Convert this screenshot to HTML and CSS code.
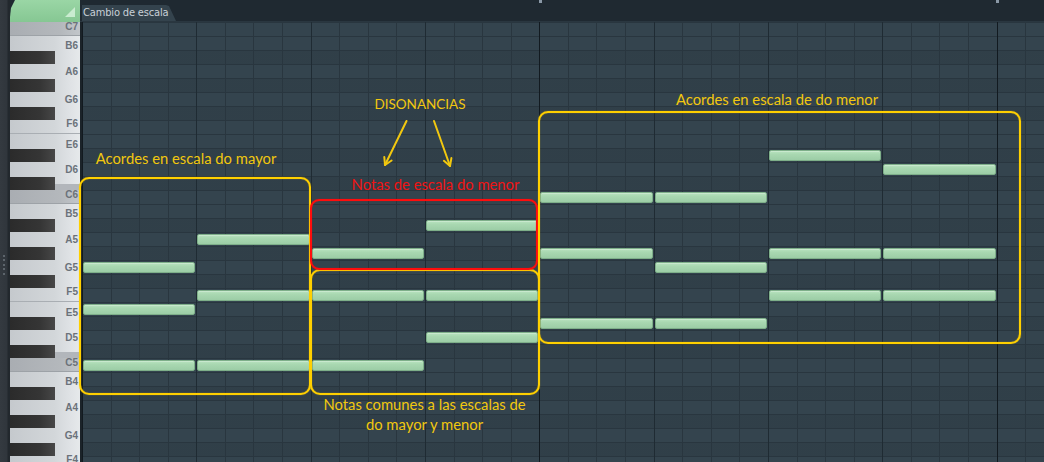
FILE: index.html
```html
<!DOCTYPE html>
<html lang="es">
<head>
<meta charset="utf-8">
<title>Cambio de escala</title>
<link rel="stylesheet" href="styles.css">
</head>
<body>
<div class="app">
  <div class="sidebar"><div class="grip"><i></i><i></i><i></i><i></i><i></i></div></div>
  <div class="main">
    <div class="topbar">
      <div class="corner"><span class="corner-tri"></span></div>
      <div class="tabs">
        <div class="tab">Cambio de escala</div>
        <span class="marker m-bar2"></span>
        <span class="marker m-bar3"></span>
      </div>
    </div>
    <div class="body">
      <div class="keys">
        <div class="key w c c-top"><span class="lbl">C7</span></div>
        <div class="key w b"><span class="lbl">B6</span></div>
        <div class="key k"></div>
        <div class="key w a"><span class="lbl">A6</span></div>
        <div class="key k"></div>
        <div class="key w g"><span class="lbl">G6</span></div>
        <div class="key k"></div>
        <div class="key w f"><span class="lbl">F6</span></div>
        <div class="key w e"><span class="lbl">E6</span></div>
        <div class="key k"></div>
        <div class="key w d"><span class="lbl">D6</span></div>
        <div class="key k db"></div>
        <div class="key w c"><span class="lbl">C6</span></div>
        <div class="key w b"><span class="lbl">B5</span></div>
        <div class="key k"></div>
        <div class="key w a"><span class="lbl">A5</span></div>
        <div class="key k"></div>
        <div class="key w g"><span class="lbl">G5</span></div>
        <div class="key k"></div>
        <div class="key w f"><span class="lbl">F5</span></div>
        <div class="key w e"><span class="lbl">E5</span></div>
        <div class="key k"></div>
        <div class="key w d"><span class="lbl">D5</span></div>
        <div class="key k db"></div>
        <div class="key w c"><span class="lbl">C5</span></div>
        <div class="key w b"><span class="lbl">B4</span></div>
        <div class="key k"></div>
        <div class="key w a"><span class="lbl">A4</span></div>
        <div class="key k"></div>
        <div class="key w g"><span class="lbl">G4</span></div>
        <div class="key k"></div>
        <div class="key w f"><span class="lbl">F4</span></div>
      </div>
      <div class="roll">
        <div class="note" style="grid-area: 18 / 1"></div>
        <div class="note" style="grid-area: 21 / 1"></div>
        <div class="note" style="grid-area: 25 / 1"></div>

        <div class="note" style="grid-area: 16 / 2"></div>
        <div class="note" style="grid-area: 20 / 2"></div>
        <div class="note" style="grid-area: 25 / 2"></div>

        <div class="note" style="grid-area: 17 / 3"></div>
        <div class="note" style="grid-area: 20 / 3"></div>
        <div class="note" style="grid-area: 25 / 3"></div>

        <div class="note" style="grid-area: 15 / 4"></div>
        <div class="note" style="grid-area: 20 / 4"></div>
        <div class="note" style="grid-area: 23 / 4"></div>

        <div class="note" style="grid-area: 13 / 5"></div>
        <div class="note" style="grid-area: 17 / 5"></div>
        <div class="note" style="grid-area: 22 / 5"></div>

        <div class="note" style="grid-area: 13 / 6"></div>
        <div class="note" style="grid-area: 18 / 6"></div>
        <div class="note" style="grid-area: 22 / 6"></div>

        <div class="note" style="grid-area: 10 / 7"></div>
        <div class="note" style="grid-area: 17 / 7"></div>
        <div class="note" style="grid-area: 20 / 7"></div>

        <div class="note" style="grid-area: 11 / 8"></div>
        <div class="note" style="grid-area: 17 / 8"></div>
        <div class="note" style="grid-area: 20 / 8"></div>
      </div>
    </div>
  </div>

  <div class="overlay">
    <div class="box box-major"></div>
    <div class="box box-common"></div>
    <div class="box box-red"></div>
    <div class="box box-minor"></div>

    <div class="label lbl-dis">DISONANCIAS</div>
    <div class="label lbl-minor">Acordes en escala de do menor</div>
    <div class="label lbl-major">Acordes en escala do mayor</div>
    <div class="label red lbl-red">Notas de escala do menor</div>
    <div class="label lbl-common">Notas comunes a las escalas de<br>do mayor y menor</div>

    <svg class="arrows" width="1044" height="462" viewBox="0 0 1044 462">
      <g stroke="#f2c80f" stroke-width="2" fill="none" stroke-linecap="round" stroke-linejoin="round">
        <line x1="406.5" y1="121" x2="385" y2="165"/>
        <polyline points="384.3,157 385,165 391.6,160.5"/>
        <line x1="434" y1="121" x2="450" y2="166"/>
        <polyline points="443.9,160.8 450,166 451.4,158.1"/>
      </g>
    </svg>
  </div>
</div>
</body>
</html>
```

FILE: styles.css
```css
* { box-sizing: border-box; }

html, body {
  margin: 0;
  padding: 0;
  background: #1e2830;
}

.app {
  position: relative;
  width: 1044px;
  height: 462px;
  overflow: hidden;
  display: flex;
  font-family: "Liberation Sans", Arial, sans-serif;
}

/* left strip */
.sidebar {
  width: 10px;
  flex: none;
  background: linear-gradient(to right, #343a40 0, #30363c 7px, #22282d 8px, #22282d 10px);
  display: flex;
  flex-direction: column;
  padding-top: 255px;
  align-items: center;
}
.grip {
  display: flex;
  flex-direction: column;
  gap: 2.4px;
  margin-right: 2px;
}
.grip i {
  display: block;
  width: 2px;
  height: 2px;
  background: #5d656c;
}

.main {
  flex: 1;
  display: flex;
  flex-direction: column;
  min-width: 0;
}

/* top bar */
.topbar {
  height: 22px;
  flex: none;
  display: flex;
  background: #1f2931;
  border-bottom: 1px solid #2a3740;
}
.corner {
  width: 70px;
  flex: none;
  background: linear-gradient(#9ad6a5, #86c793);
  clip-path: polygon(5px 0, 100% 0, 100% 100%, 0 100%, 0 17px, 1px 8px);
  display: flex;
  justify-content: flex-end;
  align-items: flex-end;
  padding: 0 5px 5px 0;
  margin-bottom: -1px;
}
.corner-tri {
  width: 10px;
  height: 10px;
  background: #c9ecd0;
  clip-path: polygon(100% 0, 100% 100%, 0 100%);
}
.tabs {
  flex: 1;
  position: relative;
  padding-left: 2px;
  display: flex;
  align-items: flex-end;
}
.tab {
  height: 16px;
  width: 94px;
  padding: 0 0 0 1px;
  background: #34434d;
  clip-path: polygon(0 0, 84px 0, 87px 1px, 94px 100%, 0 100%);
  color: #c9d1d8;
  font-family: "DejaVu Sans Condensed", "DejaVu Sans", sans-serif;
  font-stretch: condensed;
  font-size: 11px;
  line-height: 16px;
  white-space: nowrap;
  letter-spacing: -0.15px;
}
.marker {
  position: absolute;
  top: 0;
  width: 3px;
  height: 3px;
  background: #8a98a6;
}
.m-bar2 { left: 459px; }
.m-bar3 { left: 916px; }

/* body */
.body {
  flex: 1;
  display: flex;
  min-height: 0;
}

/* piano keys */
.keys {
  width: 72px;
  flex: none;
  display: flex;
  flex-direction: column;
  border-right: 2px solid #1b2329;
  background: linear-gradient(to right, #c5c9cd 0, #d3d7da 45px, #dfe2e5 60px, #e6e9eb 70px);
}
.key {
  height: 14px;
  flex: none;
  display: flex;
  justify-content: flex-end;
  position: relative;
}
.key.k {
  justify-content: flex-start;
}
.key.k::before {
  content: "";
  display: block;
  width: 45px;
  height: 13px;
  margin-top: 1px;
  background: linear-gradient(to right, #2b2b2b 0, #353535 30px, #474747 45px);
}
.key.db {
  background: linear-gradient(to bottom, transparent 0 8px, #b2b6bb 8px 14px);
}
.key.c {
  background: linear-gradient(to right, #a9adb2 0, #b4b8bc 50px, #c2c6ca 70px);
  border-bottom: 1px solid #9da2a7;
}
.key.c-top {
  background: linear-gradient(to right, #a9adb2 0, #b4b8bc 50px, #c2c6ca 70px);
}
.key.f {
  border-bottom: 1px solid #a9aeb3;
}
.lbl {
  font-size: 10px;
  font-weight: bold;
  line-height: 14px;
  color: #6b727a;
  padding-right: 2px;
}
.c .lbl { margin-top: -2px; }
.d .lbl { margin-top: 1px; }
.e .lbl { margin-top: 4px; }
.f .lbl { margin-top: -3px; }
.g .lbl { margin-top: 1px; }
.a .lbl { margin-top: 1px; }
.b .lbl { margin-top: 3px; }

/* piano roll */
.roll {
  flex: 1;
  display: grid;
  grid-template-columns: repeat(9, 114.3333px);
  grid-template-rows: repeat(32, 14px);
  background-color: #34444e;
  background-image:
    repeating-linear-gradient(to right, #121a20 0 1px, transparent 1px 457.3333px),
    repeating-linear-gradient(to right, #1f2b33 0 1px, transparent 1px 114.3333px),
    repeating-linear-gradient(to right, #29363f 0 1px, transparent 1px 28.5833px),
    repeating-linear-gradient(to bottom, #29363f 0 1px, transparent 1px 14px),
    repeating-linear-gradient(to bottom,
      transparent 0 28px, rgba(0,0,0,.07) 28px 42px,
      transparent 42px 56px, rgba(0,0,0,.07) 56px 70px,
      transparent 70px 84px, rgba(0,0,0,.07) 84px 98px,
      transparent 98px 126px, rgba(0,0,0,.07) 126px 140px,
      transparent 140px 154px, rgba(0,0,0,.07) 154px 168px);
  overflow: hidden;
}
.note {
  margin: 2px 1px 1px 1px;
  border-radius: 2px;
  border: 1px solid #7eaf89;
  background: linear-gradient(#b9e3c0 0, #a9d8b1 35%, #9ccda6 100%);
  box-shadow: inset 0 1px 0 rgba(255,255,255,.25);
}

/* annotations */
.overlay {
  position: absolute;
  inset: 0;
  pointer-events: none;
}
.box {
  position: absolute;
  border: 2px solid #ffd000;
  border-radius: 10px;
  box-shadow: 0 0 1px rgba(255, 208, 0, .8), inset 0 0 1px rgba(255, 208, 0, .8);
}
.box-major  { left: 79px;  top: 177px; width: 232px; height: 218px; }
.box-common { left: 310px; top: 269px; width: 230px; height: 126px; }
.box-red    { left: 310px; top: 199px; width: 228px; height: 71px; border-color: #ff0d0d; box-shadow: 0 0 1px rgba(255,0,0,.8), inset 0 0 1px rgba(255,0,0,.8); border-radius: 9px; }
.box-minor  { left: 538px; top: 111px; width: 483px; height: 233px; }

.label {
  position: absolute;
  width: 300px;
  margin-left: -150px;
  text-align: center;
  font-family: Lato, "Open Sans", sans-serif;
  font-size: 14.8px;
  line-height: 16px;
  color: #f2c80f;
  white-space: nowrap;
}
.label.red { color: #f01414; }
.lbl-dis    { left: 420px; top: 96px; font-size: 13.5px; }
.lbl-minor  { left: 777px; top: 91px; }
.lbl-major  { left: 186px; top: 150px; }
.lbl-red    { left: 435.5px; top: 176px; }
.lbl-common { left: 424.5px; top: 394px; line-height: 20px; }

.arrows {
  position: absolute;
  left: 0;
  top: 0;
}
```
